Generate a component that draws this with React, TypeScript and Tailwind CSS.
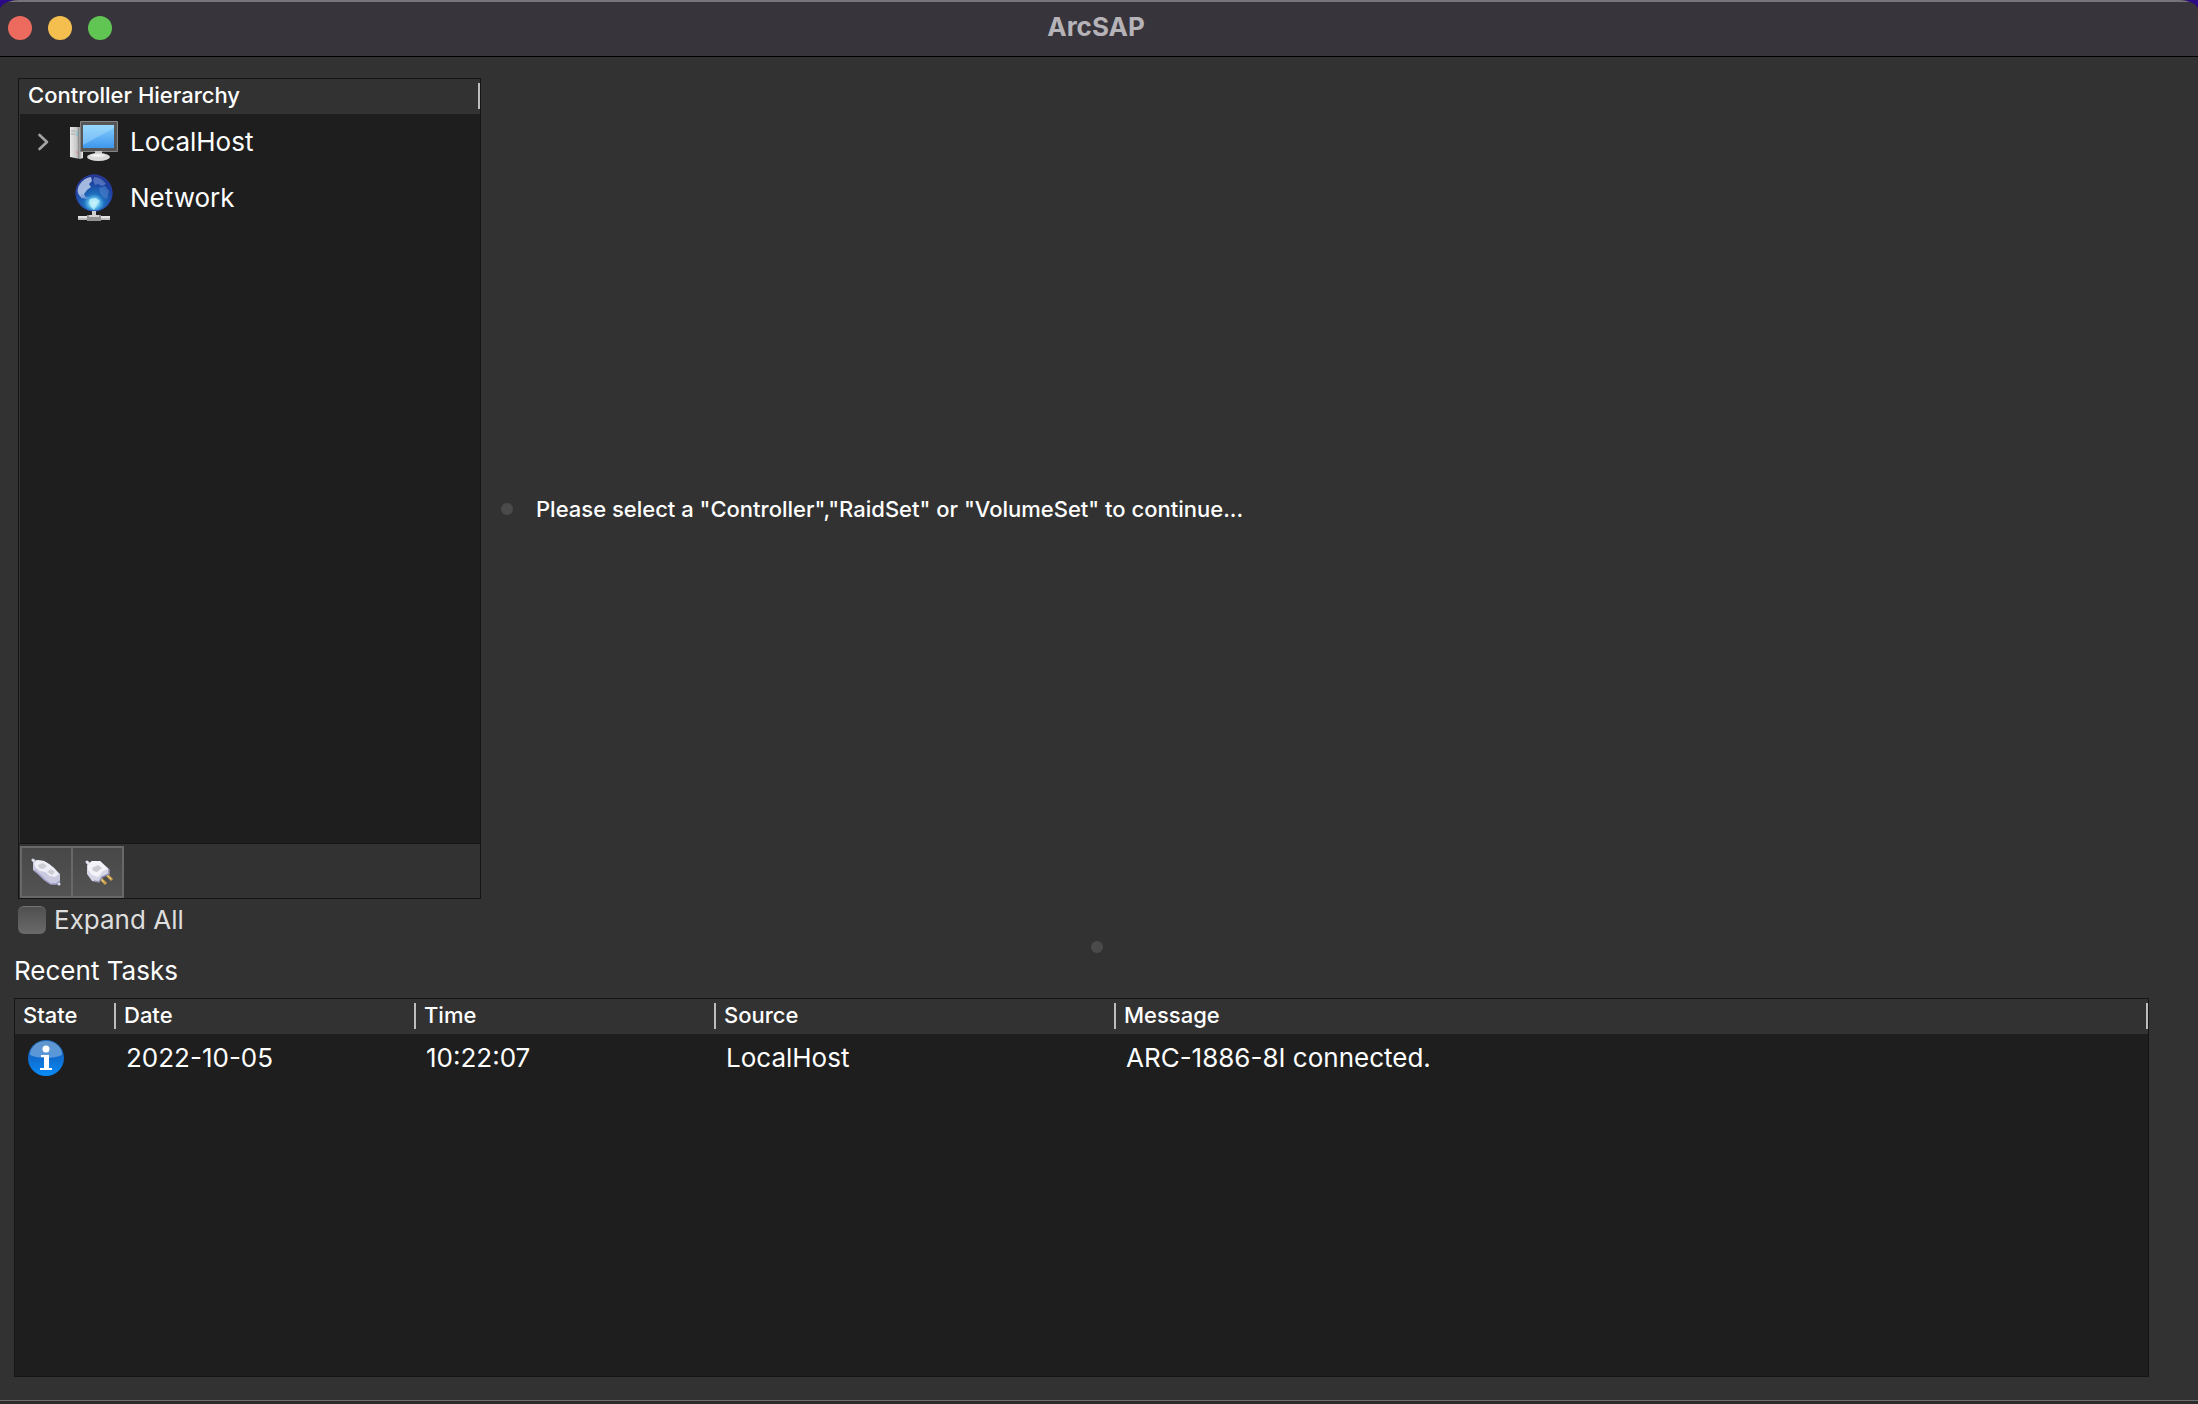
import { useState } from 'react';

type Task = { date: string; time: string; source: string; message: string };

const TASKS: Task[] = [
  { date: '2022-10-05', time: '10:22:07', source: 'LocalHost', message: 'ARC-1886-8I connected.' },
];

const COLUMNS = [
  { label: 'State', width: 'w-[101px]' },
  { label: 'Date', width: 'w-[300px]' },
  { label: 'Time', width: 'w-[300px]' },
  { label: 'Source', width: 'w-[400px]' },
  { label: 'Message', width: '' },
];

export default function App() {
  const [expandAll, setExpandAll] = useState(false);

  return (
    <div className="min-h-screen flex flex-col bg-[#2b0a86] font-['Inter','Liberation_Sans',sans-serif] text-white">
      <div className="flex-1 flex flex-col overflow-hidden rounded-tl-[20px_10px] rounded-tr-[20px_10px] bg-[#323232]">
        <TitleBar />

        <main className="flex-1 flex flex-col pt-[21px]">
          <div className="flex-1 flex">
            <section className="w-[463px] ml-[18px] flex flex-col shrink-0">
              <div className="flex-1 flex flex-col border border-[#151515]">
                <div className="h-[35px] flex justify-between pl-[9px] pt-[4px]">
                  <h2 className="text-[22px] leading-[24px] font-medium">Controller Hierarchy</h2>
                  <span className="w-[2px] h-[26px] bg-[#bdbdbd]" />
                </div>
                <ul className="flex-1 ml-px bg-[#1e1e1e]">
                  <li className="h-[56px] flex items-center pl-[10px]">
                    <button aria-label="Expand LocalHost" className="w-[26px] h-[28px] flex items-center justify-center">
                      <svg width="12" height="18" viewBox="0 0 12 18" fill="none" stroke="#a3a3a3" strokeWidth="2.6" strokeLinecap="round" strokeLinejoin="round">
                        <path d="M2.500 2l7.500 7L2.500 16" />
                      </svg>
                    </button>
                    <span className="w-[48px] ml-[13px] mr-[13px]"><ComputerIcon /></span>
                    <span className="text-[26px] leading-[32px]">LocalHost</span>
                  </li>
                  <li className="h-[56px] flex items-center pl-[36px]">
                    <span className="w-[48px] ml-[13px] mr-[13px]"><GlobeIcon /></span>
                    <span className="text-[26px] leading-[32px]">Network</span>
                  </li>
                </ul>
                <div className="h-[55px] flex border-t border-[#151515] pl-px pt-[2px]">
                  <button aria-label="Connect" className="w-[53px] flex items-center justify-center border-2 border-[#686868] bg-linear-to-b from-[#484848] to-[#535353]">
                    <ConnectorIcon />
                  </button>
                  <button aria-label="Disconnect" className="w-[53px] -ml-[2px] flex items-center justify-center border-2 border-[#686868] bg-linear-to-b from-[#484848] to-[#535353]">
                    <PlugIcon />
                  </button>
                </div>
              </div>
              <label className="h-[42px] flex items-center gap-[8px] text-[26px] leading-[32px] text-[#dedede]">
                <input type="checkbox" checked={expandAll} onChange={(e) => setExpandAll(e.target.checked)}
                  className="appearance-none size-[28px] rounded-[6px] border-t border-[#747474] bg-linear-to-b from-[#505050] to-[#6a6a6a] checked:from-[#2f7bf6] checked:to-[#1f68e0]" />
                Expand All
              </label>
            </section>

            <span className="w-[12px] h-[12px] mt-[425px] ml-[20px] rounded-full bg-[#4a4a4a]" />
            <p className="mt-[418px] ml-[23px] text-[22px] leading-[26px] font-medium">
              Please select a "Controller","RaidSet" or "VolumeSet" to continue...
            </p>
          </div>

          <div className="h-[14px] flex justify-center pr-[4px]">
            <span className="w-[12px] h-[12px] rounded-full bg-[#4a4a4a]" />
          </div>

          <section className="pl-[14px] pr-[49px]">
            <h2 className="h-[43px] text-[26px] leading-[32px]">Recent Tasks</h2>
            <TaskTable />
          </section>
          <div className="h-[23px]" />
          <div className="h-[4px] border-t border-[#6e6e6e] bg-[#2c2c2c]" />
        </main>
      </div>
    </div>
  );
}

function TitleBar() {
  return (
    <header className="h-[57px] grid grid-cols-[1fr_auto_1fr] items-start border-t-2 border-t-[#77747a] border-b border-b-black bg-[#38343b] pl-[8px] pr-[14px]">
      <div className="flex gap-[16px] pt-[14px]">
        <button aria-label="Close" className="size-[24px] rounded-full bg-[#ec6a5e]" />
        <button aria-label="Minimize" className="size-[24px] rounded-full bg-[#f4bf4f]" />
        <button aria-label="Zoom" className="size-[24px] rounded-full bg-[#61c554]" />
      </div>
      <h1 className="pt-[9px] text-[26px] leading-[32px] font-bold text-[#b5b3b7]">ArcSAP</h1>
    </header>
  );
}

function TaskTable() {
  return (
    <div className="h-[379px] border border-[#151515] bg-[#1e1e1e]">
      <table className="w-full table-fixed border-collapse text-left">
        <thead>
          <tr className="h-[35px] bg-[#323232]">
            {COLUMNS.map((col) => (
              <th key={col.label} className={`${col.width} px-0 pt-[4px] pb-0 align-top text-[22px] leading-[24px] font-medium`}>
                <div className="flex justify-between pl-[8px]">
                  {col.label}
                  <span className="w-[2px] h-[26px] bg-[#bdbdbd]" />
                </div>
              </th>
            ))}
          </tr>
        </thead>
        <tbody>
          {TASKS.map((task) => (
            <tr key={task.date + task.time} className="h-[48px] text-[26px] leading-[32px]">
              <td className="py-0 pr-0 pl-[12px]"><InfoIcon /></td>
              <td className="py-0 pr-0 pl-[10px]">{task.date}</td>
              <td className="py-0 pr-0 pl-[10px]">{task.time}</td>
              <td className="py-0 pr-0 pl-[10px]">{task.source}</td>
              <td className="py-0 pr-0 pl-[10px]">{task.message}</td>
            </tr>
          ))}
        </tbody>
      </table>
    </div>
  );
}

function ComputerIcon() {
  return (
    <svg width="50" height="44" viewBox="0 0 50 44">
      <defs>
        <linearGradient id="screen" x1="0" y1="0" x2="0" y2="1">
          <stop offset="0" stopColor="#86d0fb" />
          <stop offset="1" stopColor="#3f97ee" />
        </linearGradient>
        <linearGradient id="tower" x1="0" y1="0" x2="1" y2="0">
          <stop offset="0" stopColor="#e8e8e8" />
          <stop offset=".55" stopColor="#c4c4c4" />
          <stop offset=".65" stopColor="#8e8e8e" />
          <stop offset="1" stopColor="#f0f0f0" />
        </linearGradient>
      </defs>
      <path d="M1 7h13v31l-3 1-10-2z" fill="url(#tower)" />
      <path d="M2 11h4M2 14h4" stroke="#a5a5a5" />
      <path d="M8 11v5" stroke="#6fc7d8" />
      <path d="M8 31v3" stroke="#d88" />
      <rect x="11" y="1" width="38" height="31" rx="1" fill="#858585" />
      <rect x="12" y="2" width="36" height="29" fill="#565656" />
      <rect x="14" y="5" width="31" height="23" fill="url(#screen)" />
      <path d="M14 5h31v3L14 25z" fill="#b5e4ff" opacity=".4" />
      <path d="M26 31h7v4h-7z" fill="#c9c9c9" />
      <ellipse cx="29.500" cy="37" rx="11.500" ry="4" fill="#d9d9d9" />
      <ellipse cx="29" cy="35.500" rx="7" ry="1.500" fill="#f2f2f2" />
    </svg>
  );
}

function GlobeIcon() {
  return (
    <svg width="48" height="50" viewBox="0 0 48 50">
      <defs>
        <radialGradient id="globe" cx=".5" cy=".8" r=".8">
          <stop offset="0" stopColor="#3fa6e4" />
          <stop offset=".4" stopColor="#1d66b8" />
          <stop offset=".75" stopColor="#1b3f9c" />
          <stop offset="1" stopColor="#26368c" />
        </radialGradient>
        <radialGradient id="glow">
          <stop offset="0" stopColor="#c6f6ff" />
          <stop offset=".5" stopColor="#7ed6f5" stopOpacity=".8" />
          <stop offset="1" stopColor="#3fa6e4" stopOpacity="0" />
        </radialGradient>
      </defs>
      <circle cx="25" cy="20" r="18.500" fill="url(#globe)" />
      <path d="M9 15c2-6 7-10 13-11l1 4-3 3 2 3-4 3-3 4 1 3-3 1-3-3c-1-2-2-4-1-7z" fill="#c6d6ef" opacity=".8" />
      <path d="M12 20l4 3 4 2-3 1-5-1z" fill="#7f9ddb" opacity=".7" />
      <path d="M25 4c5 0 9 3 12 7l-4 2-4-2-3 1-2-4z" fill="#6f8fd4" opacity=".6" />
      <path d="M30 15l6-2 4 5-2 8-4-2-3-4z" fill="#4c82cd" opacity=".6" />
      <ellipse cx="25" cy="30" rx="10" ry="9" fill="url(#glow)" />
      <path d="M21 26l6-1 4 3-3 4-3 5-3-3-2-4z" fill="#c9f4fb" opacity=".7" />
      <circle cx="25" cy="20" r="18" stroke="#2c3fa8" fill="none" opacity=".8" />
      <path d="M23 38h4v5h-4z" fill="#cfcfcf" />
      <rect x="9" y="43" width="32" height="4" fill="#bcbcbc" />
      <rect x="9" y="43" width="32" height="2" fill="#e2e2e2" />
      <rect x="18" y="42" width="14" height="6" fill="#939393" />
      <rect x="20" y="42" width="10" height="2" fill="#d4d4d4" />
    </svg>
  );
}

function ConnectorIcon() {
  return (
    <svg width="32" height="30" viewBox="0 0 32 30">
      <path d="M2 3l3 3M25 24l3 3" stroke="#dcdcea" strokeWidth="3" strokeLinecap="round" />
      <path d="M2 5l4-2 7 1 5 3 5 4 6 6v7l-4 3h-6l-6-4-5-5-6-5z" fill="#c9c9df" />
      <path d="M3 6l3-3 7 1 5 3 5 4 5 6-4 3-5-1-5-4-5-1-5-4z" fill="#eeeef6" />
      <path d="M3 13l6 5 5 5 6 4h5l4-3" stroke="#a0a0cc" strokeWidth="1.500" fill="none" />
      <path d="M7 8l5-2 4 3-4 3-4-1zM16 15l4-3 4 3-3 3z" fill="#cdcdd4" />
    </svg>
  );
}

function PlugIcon() {
  return (
    <svg width="32" height="30" viewBox="0 0 32 30">
      <path d="M24 17l6 6M18 21l6 6" stroke="#c99f4c" strokeWidth="3" />
      <path d="M25 18l4 4M19 22l3 3" stroke="#f0d48c" strokeWidth="1" />
      <path d="M5 5l3 3" stroke="#e4e4f0" strokeWidth="3" strokeLinecap="round" />
      <path d="M5 8l5-4h8l9 8v5l-7 3-3 5-7-1-5-7z" fill="#d6d6e6" />
      <path d="M6 8l4-4h8l8 8-5 2-5 6-6-2-4-5z" fill="#f3f3f9" />
      <path d="M27 12v5l-7 3-3 5-5-1" stroke="#8f8fae" strokeWidth="1.500" fill="none" />
      <path d="M10 11l6-3 4 3-5 4-4-1z" fill="#cbcbd0" />
    </svg>
  );
}

function InfoIcon() {
  return (
    <svg width="38" height="38" viewBox="0 0 38 38" role="img" aria-label="Info">
      <defs>
        <linearGradient id="info" x1="0" y1="0" x2="0" y2="1">
          <stop offset="0" stopColor="#2068b8" />
          <stop offset=".5" stopColor="#0f6cce" />
          <stop offset="1" stopColor="#0a8cf8" />
        </linearGradient>
      </defs>
      <circle cx="19" cy="19" r="18" fill="url(#info)" />
      <path d="M3 16a16 14 0 0 1 32 0c-8 4-24 4-32 0z" fill="#fff" opacity=".3" />
      <circle cx="19" cy="10" r="3.500" fill="#fff" />
      <path d="M14 16h8v13h3v2H13v-2h4V18h-3z" fill="#fff" />
    </svg>
  );
}
